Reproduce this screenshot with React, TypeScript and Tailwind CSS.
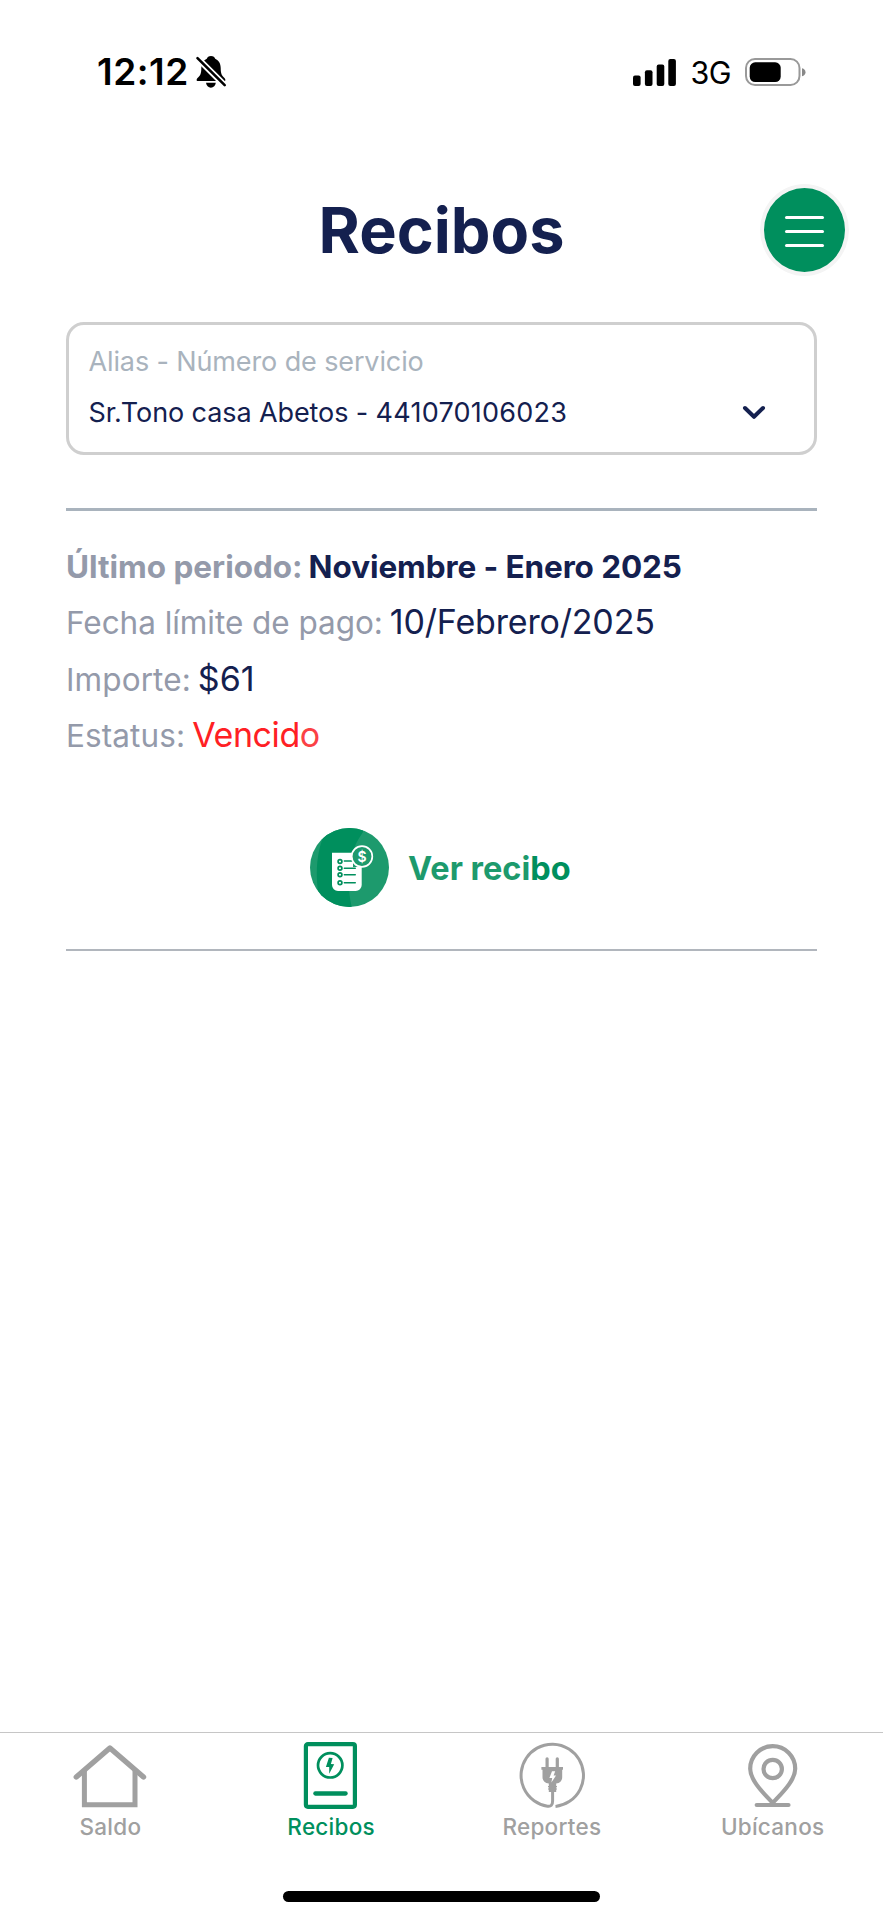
import React from 'react';

interface Detail {
  label: string;
  value: React.ReactNode;
  rowClass?: string;
  labelClass: string;
  valueClass: string;
}

interface Tab {
  label: string;
  icon: React.ReactNode;
  active?: boolean;
}

const details: Detail[] = [
  {
    label: 'Último periodo:',
    value: 'Noviembre - Enero 2025',
    rowClass: 'pt-px',
    labelClass: 'text-[31.5px] font-bold tracking-[-0.02px]',
    valueClass: 'text-[31.5px] font-bold text-[#14204f] tracking-[-0.1px] -ml-px',
  },
  {
    label: 'Fecha límite de pago:',
    value: '10/Febrero/2025',
    labelClass: 'text-[31.5px] tracking-[-0.04px]',
    valueClass: 'text-[34px] text-[#14204f] tracking-[-0.17px]',
  },
  {
    label: 'Importe:',
    value: '$61',
    labelClass: 'text-[31.5px] tracking-[0.1px]',
    valueClass: 'text-[34px] text-[#14204f]',
  },
  {
    label: 'Estatus:',
    value: (
      <>
        Vencid<span className="text-[#fb4145]">o</span>
      </>
    ),
    labelClass: 'text-[31.5px] tracking-[0.1px]',
    valueClass: 'text-[34px] text-[#ff2024] tracking-[-0.4px]',
  },
];

const BellOffIcon = () => (
  <svg className="h-9 w-[34px]" viewBox="0 0 34 36">
    <path
      d="M17 2c-2.3 0-3.8 1.2-4.2 2.8C9.200 6.300 7.300 9.700 7.300 14c0 5.500-1 7.300-3 9.300-1.200 1.200-1.700 2-1.700 2.700 0 .6.500 1 1.200 1h26.400c.700 0 1.200-.4 1.200-1 0-.7-.5-1.500-1.700-2.700-2-2-3-3.800-3-9.300 0-4.300-2-7.700-5.500-9.200C20.800 3.200 19.300 2 17 2z"
      fill="#000"
    />
    <path d="M12 28.800h9.800c-.4 3-2.300 4.900-4.900 4.900s-4.500-1.900-4.900-4.900z" fill="#000" />
    <path d="M2 2.600l30.200 30.200" stroke="#fff" strokeWidth="6.200" />
    <path d="M3.500 4.200l27.200 27" stroke="#000" strokeWidth="2.600" strokeLinecap="round" />
  </svg>
);

const SignalIcon = () => (
  <svg className="h-[27px] w-[43px]" viewBox="0 0 43 27" fill="#000">
    <rect x="0" y="16.500" width="7.600" height="10.500" rx="2" />
    <rect x="11.900" y="11.300" width="7.600" height="15.700" rx="2" />
    <rect x="23.700" y="5.600" width="7.600" height="21.400" rx="2" />
    <rect x="35.300" y="0" width="7.600" height="27" rx="2" />
  </svg>
);

const BatteryIcon = () => (
  <svg className="h-7 w-[62px]" viewBox="0 0 62 28">
    <rect x="1" y="1" width="53.500" height="26" rx="9" fill="none" stroke="#999" strokeWidth="2" />
    <rect x="4.700" y="4.300" width="31" height="19.700" rx="5.500" fill="#000" />
    <path d="M57 10.200c2.200.6 3.500 2 3.500 4s-1.300 3.400-3.500 4z" fill="#888" />
  </svg>
);

const ReceiptIcon = () => (
  <svg className="size-[79px]" viewBox="0 0 79 79">
    <clipPath id="disc">
      <circle cx="39.500" cy="39.500" r="39.500" />
    </clipPath>
    <g clipPath="url(#disc)">
      <rect width="79" height="79" fill="#1d9a6d" />
      <path d="M18 0C8 16 4 40 9 70l10 9h22.700C38 62 38 48 40 34c2-12 7-21 13-30V0z" fill="#008f5d" />
    </g>
    <path d="M22 24.700h21v14.300h8.700V57a6 6 0 0 1-6 6H28a6 6 0 0 1-6-6z" fill="#fff" />
    <g fill="none" stroke="#008f5d" strokeWidth="1.700">
      <circle cx="30" cy="33.500" r="1.900" />
      <circle cx="30" cy="40.200" r="1.900" />
      <circle cx="30" cy="46.800" r="1.900" />
      <circle cx="30" cy="54.700" r="1.900" />
      <path d="M34.300 33h9M34.300 40.200h11M34.300 46.800h11M34.300 54.700h11" strokeLinecap="round" strokeWidth="1.400" />
    </g>
    <circle cx="52" cy="28.500" r="10.300" fill="#1d9a6d" stroke="#fff" strokeWidth="1.700" />
    <text x="52" y="33.600" textAnchor="middle" fontFamily="Inter, sans-serif" fontSize="14" fontWeight="600" fill="#fff">
      $
    </text>
  </svg>
);

const HomeIcon = () => (
  <svg className="h-[72px] w-[76px]" viewBox="0 0 76 72" fill="none" stroke="currentColor">
    <path d="M4.300 37L37.900 8l33.600 29" strokeWidth="5.400" strokeLinecap="round" strokeLinejoin="round" />
    <path d="M12.400 31v33.800H63V31" strokeWidth="5" />
  </svg>
);

const BillIcon = () => (
  <svg className="h-[72px] w-[76px]" viewBox="0 0 76 72" fill="none" stroke="currentColor">
    <rect x="12.900" y="4.100" width="49" height="62.700" rx="2" strokeWidth="4.200" />
    <circle cx="37.200" cy="25.300" r="12.200" strokeWidth="2.700" />
    <path d="M22.400 53.500h30.200" strokeWidth="4.300" strokeLinecap="round" />
    <path d="M35.900 17.700l3.700.3-1.700 6 3.300.3-5 9.400V27h-3.300z" fill="currentColor" stroke="none" />
  </svg>
);

const PlugIcon = () => (
  <svg className="h-[72px] w-[76px]" viewBox="0 0 76 72" fill="none" stroke="currentColor">
    <path
      d="M41.500 66.400A31.200 31.200 0 1 0 33.500 66.200C37 66.800 38.600 65 38.600 61V50"
      strokeWidth="3"
    />
    <path d="M33.100 28V18.800M43.300 28V18.800" strokeWidth="3.200" strokeLinecap="round" />
    <g fill="currentColor" stroke="none">
      <path d="M27.400 27h21.600v2.800h-.8v7.400c0 3.500-2 6-6 6.300v2.500h.8v1.200h-.8v1.200h.8v1.200h-.8V52h-7.400v-2.400h-.8v-1.200h.8v-1.200h-.8V46h.8v-2.500c-4-.3-6.300-2.800-6.300-6.300v-7.400h-1.100z" />
      <path d="M38 31.300h3.200l-1.600 4.300h2.400l-4.600 7 .8-4.600h-2.800z" fill="#fff" />
    </g>
  </svg>
);

const PinIcon = () => (
  <svg className="h-[72px] w-[76px]" viewBox="0 0 76 72" fill="none" stroke="currentColor" strokeWidth="4.200">
    <path d="M37.700 63C30 54.500 15.200 41 15.200 28.700a22.500 22.500 0 0 1 45 0C60.200 41 45.400 54.500 37.700 63z" />
    <circle cx="37.700" cy="29" r="9.200" />
    <path d="M21.700 65h31.800" strokeLinecap="round" />
  </svg>
);

const tabs: Tab[] = [
  { label: 'Saldo', icon: <HomeIcon /> },
  { label: 'Recibos', icon: <BillIcon />, active: true },
  { label: 'Reportes', icon: <PlugIcon /> },
  { label: 'Ubícanos', icon: <PinIcon /> },
];

const StatusBar = () => (
  <div className="flex h-36 items-center justify-between pl-[97px] pr-[76px] text-black">
    <div className="flex items-center gap-[5px]">
      <span className="text-[37px] font-semibold tracking-[0.5px]">12:12</span>
      <BellOffIcon />
    </div>
    <div className="flex items-center">
      <SignalIcon />
      <span className="ml-[15px] mr-[14px] pt-px text-[30.5px] tracking-[-0.6px]">3G</span>
      <BatteryIcon />
    </div>
  </div>
);

const App: React.FC = () => {
  return (
    <div className="flex min-h-[1920px] w-[883px] flex-col bg-white font-['Inter',sans-serif]">
      <StatusBar />

      {/* Title and menu button */}
      <header className="grid h-[172px] grid-cols-[1fr_auto_1fr] items-center px-[34px]">
        <h1 className="col-start-2 text-[63px] font-bold leading-none text-[#14204f]">Recibos</h1>
        <button className="flex h-[92px] w-[89px] flex-col items-center justify-center gap-[11px] justify-self-end rounded-[50%] border-4 border-[#f4f4f4] bg-[#008f5d] pt-[2px]">
          <span className="h-[3px] w-[39px] rounded-full bg-white" />
          <span className="h-[3px] w-[39px] rounded-full bg-white" />
          <span className="h-[3px] w-[39px] rounded-full bg-white" />
        </button>
      </header>

      <main className="px-[66px]">
        {/* Service selector */}
        <div className="mt-[6px] h-[133px] rounded-[18px] border-[3px] border-[#cfcfcf] pl-[19.5px] pr-[48px] pt-[11px] text-[27px] leading-[51px]">
          <p className="tracking-[-0.12px] text-[#a9b3bd]">Alias - Número de servicio</p>
          <div className="flex items-center justify-between text-[#14204f]">
            <span className="tracking-[-0.1px]">
              Sr.Tono casa Abetos - <span className="tracking-[0.25px]">441070106023</span>
            </span>
            <svg className="h-[15px] w-6" viewBox="0 0 24 15" fill="none">
              <path d="M3 3l9 8.800L21 3" stroke="#14204f" strokeWidth="4" strokeLinecap="round" strokeLinejoin="round" />
            </svg>
          </div>
        </div>

        <div className="mt-[53px] h-[3px] bg-[#a9b3bd]" />

        {/* Receipt details */}
        <div className="mt-[27px]">
          {details.map(item => (
            <div
              key={item.label}
              className={`flex h-[56.25px] items-baseline gap-[7px] whitespace-nowrap leading-[56px] ${item.rowClass ?? ''}`}
            >
              <span className={`text-[#949aaa] ${item.labelClass}`}>{item.label}</span>
              <span className={item.valueClass}>{item.value}</span>
            </div>
          ))}
        </div>

        <button className="mt-[65px] flex items-center gap-[19px] pl-[244px]">
          <ReceiptIcon />
          <span className="pt-[3px] text-[32.5px] font-bold leading-none text-[#1d9a6d]">
            Ver reci<span className="text-[#008f5d]">bo</span>
          </span>
        </button>

        <div className="mt-[42px] h-[2px] bg-[#b1b6bd]" />
      </main>

      {/* Bottom navigation */}
      <nav className="mt-auto h-[188px] border-t border-[#c6c6c6] pt-[7px]">
        <div className="grid grid-cols-4">
          {tabs.map(tab => (
            <button
              key={tab.label}
              className={`flex flex-col items-center ${tab.active ? 'text-[#008f5d]' : 'text-[#a0a0a0]'}`}
            >
              {tab.icon}
              <span className="pt-px text-[22.5px] font-medium leading-7 tracking-[0.25px]">{tab.label}</span>
            </button>
          ))}
        </div>
        <div className="mx-auto mt-[50px] h-[11px] w-[317px] rounded-full bg-black" />
      </nav>
    </div>
  );
};

export default App;
